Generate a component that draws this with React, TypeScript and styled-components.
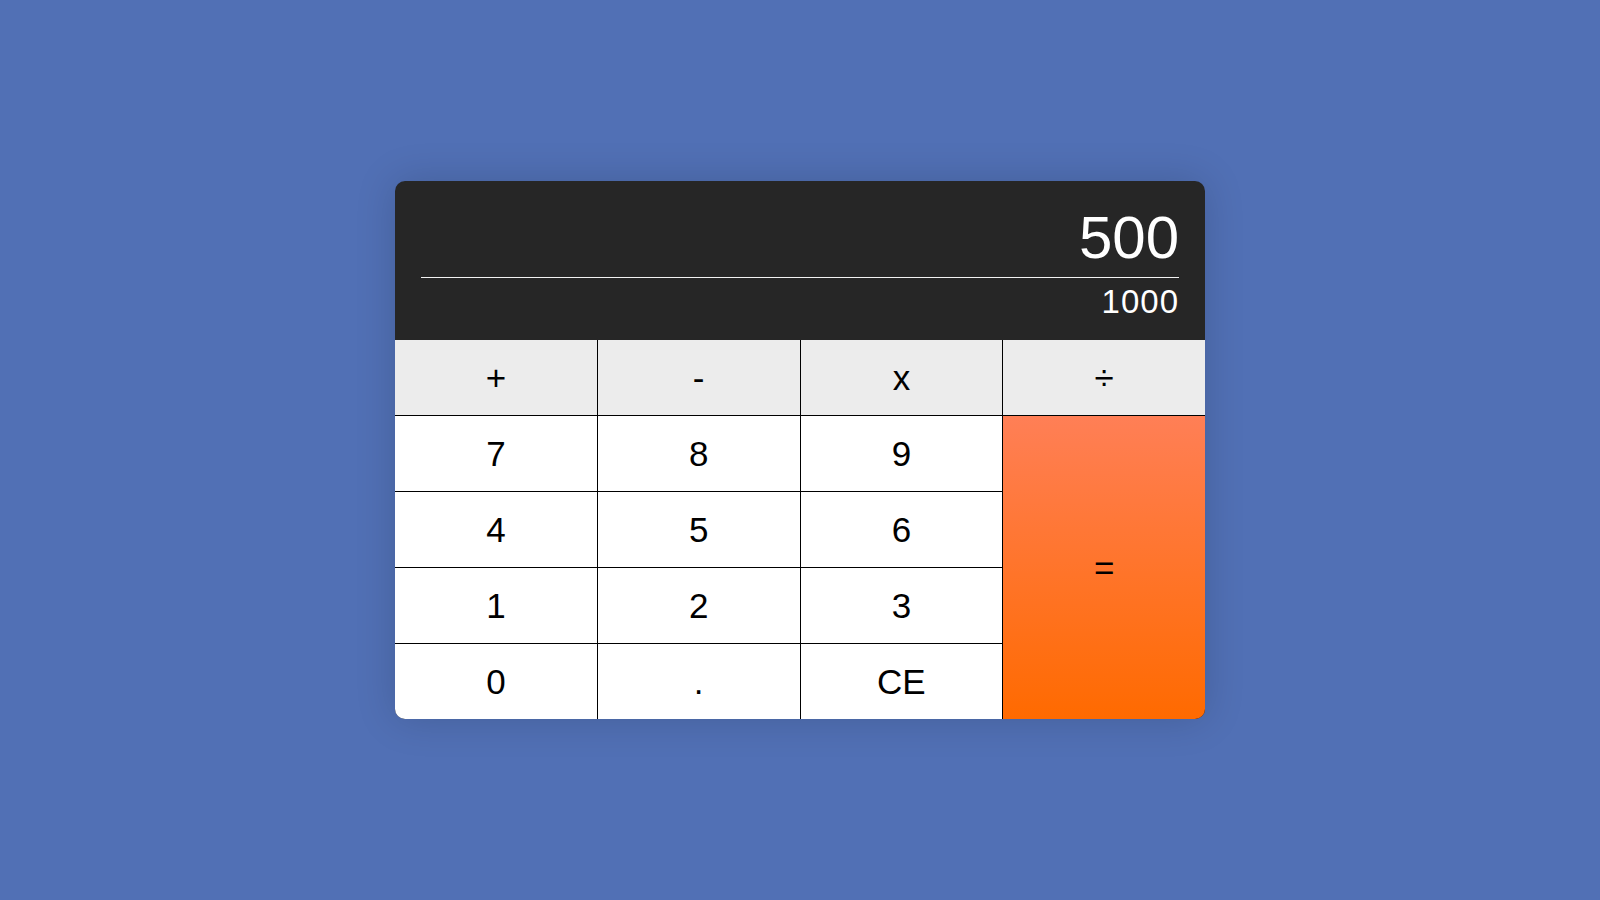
import React from "react";
import styled, { createGlobalStyle } from "styled-components";

const GlobalStyle = createGlobalStyle`
  * { box-sizing: border-box; }
  html, body { margin: 0; padding: 0; }
  body {
    background: #5170b5;
    font-family: "Liberation Sans", Arial, sans-serif;
  }
`;

const Page = styled.div`
  min-height: 100vh;
  display: flex;
  align-items: center;
  justify-content: center;
`;

const Calculator = styled.div`
  width: 810px;
  border-radius: 10px;
  overflow: hidden;
  box-shadow: 0 0 40px rgba(0, 0, 0, 0.16);
  display: flex;
  flex-direction: column;
`;

const Display = styled.div`
  height: 159px;
  background: #262626;
  color: #ffffff;
  padding: 23px 26px 20px;
  display: flex;
  flex-direction: column;
  text-align: right;
`;

const Current = styled.div`
  font-family: "Liberation Sans", Arial, sans-serif;
  font-size: 60px;
  line-height: 67px;
  padding-bottom: 6px;
  border-bottom: 1px solid #f2f2f2;
`;

const Previous = styled.div`
  font-family: "Liberation Sans", Arial, sans-serif;
  font-size: 33px;
  letter-spacing: 1px;
  line-height: 36px;
  margin-top: 6px;
`;

const Keypad = styled.div`
  display: grid;
  grid-template-columns: repeat(4, 1fr);
  grid-template-rows: repeat(5, 75px);
  gap: 1px;
  background: #000000;
`;

type Kind = "digit" | "op" | "equals";

const Key = styled.button<{ $kind: Kind }>`
  border: none;
  margin: 0;
  padding: 0;
  font-family: "Liberation Sans", Arial, sans-serif;
  font-size: 35px;
  color: #000000;
  cursor: pointer;
  display: flex;
  align-items: center;
  justify-content: center;
  background: ${(p) =>
    p.$kind === "op"
      ? "#ececec"
      : p.$kind === "equals"
      ? "linear-gradient(to bottom, #ff7f56, #ff6a00)"
      : "#ffffff"};
  ${(p) => (p.$kind === "equals" ? "grid-column: 4; grid-row: 2 / span 4;" : "")}
`;

const ops = ["+", "-", "x", "÷"];
const digits = ["7", "8", "9", "4", "5", "6", "1", "2", "3", "0", ".", "CE"];

export default function App() {
  return (
    <>
      <GlobalStyle />
      <Page>
        <Calculator>
          <Display>
            <Current>500</Current>
            <Previous>1000</Previous>
          </Display>
          <Keypad>
            {ops.map((o) => (
              <Key key={o} $kind="op">
                {o}
              </Key>
            ))}
            <Key $kind="equals">=</Key>
            {digits.map((d) => (
              <Key key={d} $kind="digit">
                {d}
              </Key>
            ))}
          </Keypad>
        </Calculator>
      </Page>
    </>
  );
}
